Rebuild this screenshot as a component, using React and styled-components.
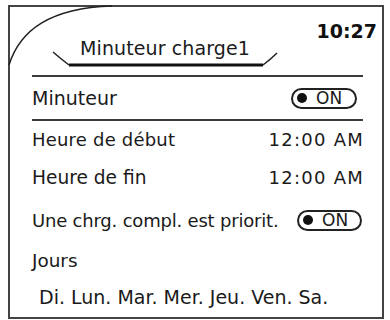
import React from 'react';
import styled, { createGlobalStyle } from 'styled-components';

const Global = createGlobalStyle`
    html, body {
        margin:0;
        padding:0;
        background:#fff;
    }
    body {
        font-family:"DejaVu Sans", Verdana, sans-serif;
        color:#1a1a1a;
    }
`;

const Frame = styled.div`
    box-sizing:border-box;
    margin:5px 0 0 8px;
    width:376px;
    height:314px;
    border:2px solid #444;
    display:flex;
    flex-direction:column;
    position:relative;
`;

const Header = styled.div`
    position:relative;
    height:68px;
    display:flex;
    justify-content:space-between;
    align-items:flex-start;
`;

const Curve = styled.svg`
    position:absolute;
    left:0;
    top:0;
    overflow:visible;
    pointer-events:none;
`;

const Tab = styled.div`
    position:relative;
    margin-left:43px;
    width:224px;
    height:60px;
    box-sizing:border-box;
    padding-top:30px;
    text-align:center;
    font-size:19px;
    line-height:23px;
    letter-spacing:0.1px;
`;

const TabEdge = styled.svg`
    position:absolute;
    left:0;
    top:0;
    overflow:visible;
`;

const Clock = styled.div`
    margin:13px 5px 0 0;
    font-size:19px;
    line-height:23px;
    font-weight:bold;
    color:#111;
`;

const Body = styled.div`
    padding:0 19px 0 22px;
    display:flex;
    flex-direction:column;
`;

const Rule = styled.div`
    height:2px;
    background:#3a3a3a;
`;

const Row = styled.div`
    height:${p => p.$h}px;
    display:flex;
    align-items:center;
    justify-content:space-between;
    padding-left:${p => p.$indent || 0}px;
    font-size:18px;
`;

const Label = styled.span`
    font-size:${p => p.$size || 18}px;
    letter-spacing:${p => p.$ls || 0}px;
`;

const Value = styled.span`
    letter-spacing:1.25px;
    margin-right:-1px;
`;

const Days = styled.span`
    font-size:19px;
`;

const Toggle = styled.span`
    box-sizing:border-box;
    display:inline-flex;
    align-items:center;
    gap:9px;
    width:${p => p.$w}px;
    height:21px;
    padding-left:4px;
    margin-right:${p => p.$mr}px;
    border:2px solid #222;
    border-radius:11px;
    font-size:17px;
    line-height:17px;
`;

const Dot = styled.span`
    width:10px;
    height:10px;
    border-radius:50%;
    background:#111;
`;

const OnSwitch = ({ w, mr }) => (
    <Toggle $w={w} $mr={mr}>
        <Dot />
        ON
    </Toggle>
);

export default function App() {
    return (
        <>
            <Global />
            <Frame>
                <Header>
                    <Curve width="110" height="70">
                        <path d="M -1 58 C 10 23, 40 1, 102 -1" fill="none" stroke="#222" strokeWidth="1.5" />
                    </Curve>
                    <Tab>
                        <TabEdge width="224" height="60">
                            <path d="M 0 45 Q 8 52, 16 58" fill="none" stroke="#222" strokeWidth="1.5" />
                            <path d="M 16 58 L 210 58" fill="none" stroke="#111" strokeWidth="3" />
                            <path d="M 210 58 Q 218 52, 224 46" fill="none" stroke="#222" strokeWidth="1.5" />
                        </TabEdge>
                        Minuteur charge1
                    </Tab>
                    <Clock>10:27</Clock>
                </Header>
                <Body>
                    <Rule />
                    <Row $h={42}>
                        <Label $size={19}>Minuteur</Label>
                        <OnSwitch w={66} mr={6} />
                    </Row>
                    <Rule />
                    <Row $h={36}>
                        <Label $ls={0.2}>Heure de début</Label>
                        <Value>12:00 AM</Value>
                    </Row>
                    <Row $h={40}>
                        <Label $size={18.6}>Heure de fin</Label>
                        <Value>12:00 AM</Value>
                    </Row>
                    <Row $h={46}>
                        <Label $ls={-0.2}>Une chrg. compl. est priorit.</Label>
                        <OnSwitch w={65} mr={1} />
                    </Row>
                    <Row $h={34}>
                        <Label $size={18.4}>Jours</Label>
                    </Row>
                    <Row $h={40} $indent={7}>
                        <Days>Di. Lun. Mar. Mer. Jeu. Ven. Sa.</Days>
                    </Row>
                </Body>
            </Frame>
        </>
    );
}
